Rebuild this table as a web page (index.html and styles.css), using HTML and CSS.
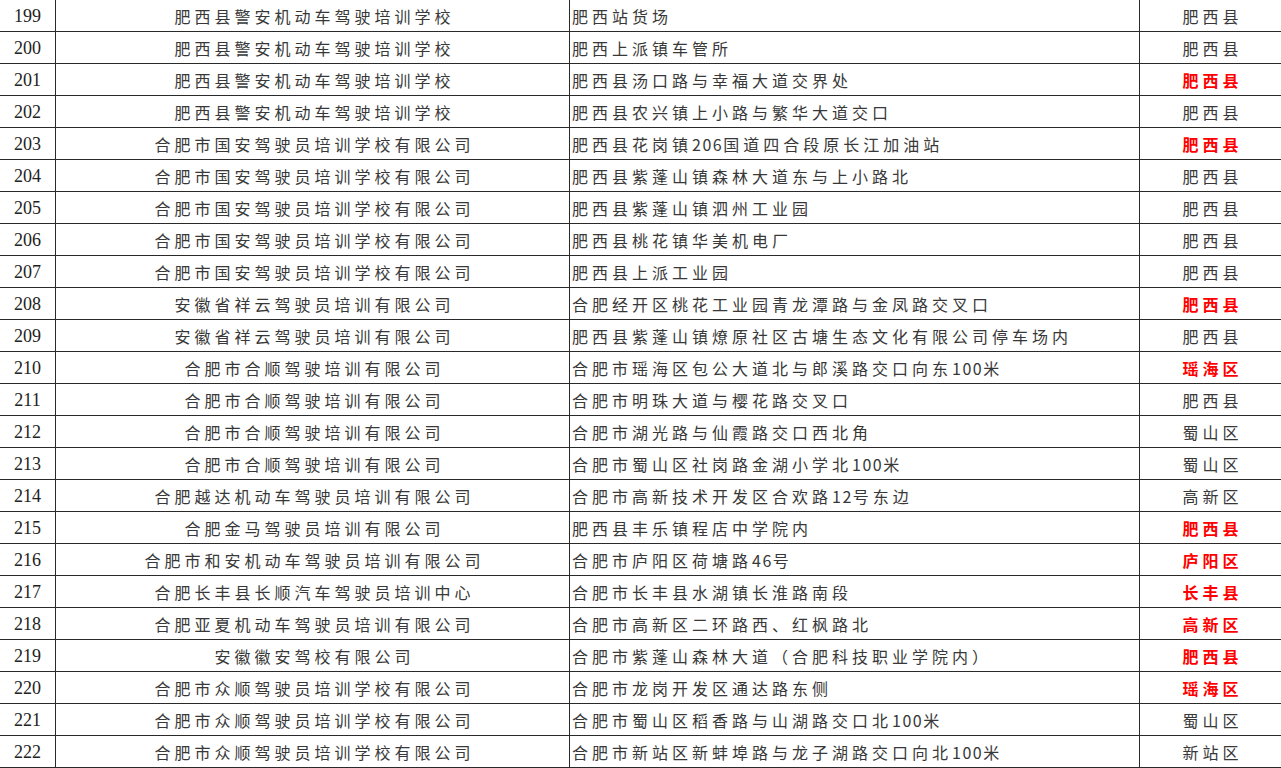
FILE: index.html
```html
<!DOCTYPE html>
<html lang="zh-CN">
<head>
<meta charset="utf-8">
<title>驾驶培训学校训练场地</title>
<link rel="stylesheet" href="styles.css">
</head>
<body>
<div class="sheet">
  <div class="row"><div class="c no">199</div><div class="c school">肥西县警安机动车驾驶培训学校</div><div class="c addr">肥西站货场</div><div class="c area">肥西县</div></div>
  <div class="row"><div class="c no">200</div><div class="c school">肥西县警安机动车驾驶培训学校</div><div class="c addr">肥西上派镇车管所</div><div class="c area">肥西县</div></div>
  <div class="row"><div class="c no">201</div><div class="c school">肥西县警安机动车驾驶培训学校</div><div class="c addr">肥西县汤口路与幸福大道交界处</div><div class="c area hot">肥西县</div></div>
  <div class="row"><div class="c no">202</div><div class="c school">肥西县警安机动车驾驶培训学校</div><div class="c addr">肥西县农兴镇上小路与繁华大道交口</div><div class="c area">肥西县</div></div>
  <div class="row"><div class="c no">203</div><div class="c school">合肥市国安驾驶员培训学校有限公司</div><div class="c addr">肥西县花岗镇<span class="num">206</span>国道四合段原长江加油站</div><div class="c area hot">肥西县</div></div>
  <div class="row"><div class="c no">204</div><div class="c school">合肥市国安驾驶员培训学校有限公司</div><div class="c addr">肥西县紫蓬山镇森林大道东与上小路北</div><div class="c area">肥西县</div></div>
  <div class="row"><div class="c no">205</div><div class="c school">合肥市国安驾驶员培训学校有限公司</div><div class="c addr">肥西县紫蓬山镇泗州工业园</div><div class="c area">肥西县</div></div>
  <div class="row"><div class="c no">206</div><div class="c school">合肥市国安驾驶员培训学校有限公司</div><div class="c addr">肥西县桃花镇华美机电厂</div><div class="c area">肥西县</div></div>
  <div class="row"><div class="c no">207</div><div class="c school">合肥市国安驾驶员培训学校有限公司</div><div class="c addr">肥西县上派工业园</div><div class="c area">肥西县</div></div>
  <div class="row"><div class="c no">208</div><div class="c school">安徽省祥云驾驶员培训有限公司</div><div class="c addr">合肥经开区桃花工业园青龙潭路与金凤路交叉口</div><div class="c area hot">肥西县</div></div>
  <div class="row"><div class="c no">209</div><div class="c school">安徽省祥云驾驶员培训有限公司</div><div class="c addr">肥西县紫蓬山镇燎原社区古塘生态文化有限公司停车场内</div><div class="c area">肥西县</div></div>
  <div class="row"><div class="c no">210</div><div class="c school">合肥市合顺驾驶培训有限公司</div><div class="c addr">合肥市瑶海区包公大道北与郎溪路交口向东<span class="num">100</span>米</div><div class="c area hot">瑶海区</div></div>
  <div class="row"><div class="c no">211</div><div class="c school">合肥市合顺驾驶培训有限公司</div><div class="c addr">合肥市明珠大道与樱花路交叉口</div><div class="c area">肥西县</div></div>
  <div class="row"><div class="c no">212</div><div class="c school">合肥市合顺驾驶培训有限公司</div><div class="c addr">合肥市湖光路与仙霞路交口西北角</div><div class="c area">蜀山区</div></div>
  <div class="row"><div class="c no">213</div><div class="c school">合肥市合顺驾驶培训有限公司</div><div class="c addr">合肥市蜀山区社岗路金湖小学北<span class="num">100</span>米</div><div class="c area">蜀山区</div></div>
  <div class="row"><div class="c no">214</div><div class="c school">合肥越达机动车驾驶员培训有限公司</div><div class="c addr">合肥市高新技术开发区合欢路<span class="num">12</span>号东边</div><div class="c area">高新区</div></div>
  <div class="row"><div class="c no">215</div><div class="c school">合肥金马驾驶员培训有限公司</div><div class="c addr">肥西县丰乐镇程店中学院内</div><div class="c area hot">肥西县</div></div>
  <div class="row"><div class="c no">216</div><div class="c school">合肥市和安机动车驾驶员培训有限公司</div><div class="c addr">合肥市庐阳区荷塘路<span class="num">46</span>号</div><div class="c area hot">庐阳区</div></div>
  <div class="row"><div class="c no">217</div><div class="c school">合肥长丰县长顺汽车驾驶员培训中心</div><div class="c addr">合肥市长丰县水湖镇长淮路南段</div><div class="c area hot">长丰县</div></div>
  <div class="row"><div class="c no">218</div><div class="c school">合肥亚夏机动车驾驶员培训有限公司</div><div class="c addr">合肥市高新区二环路西、红枫路北</div><div class="c area hot">高新区</div></div>
  <div class="row"><div class="c no">219</div><div class="c school">安徽徽安驾校有限公司</div><div class="c addr">合肥市紫蓬山森林大道（合肥科技职业学院内）</div><div class="c area hot">肥西县</div></div>
  <div class="row"><div class="c no">220</div><div class="c school">合肥市众顺驾驶员培训学校有限公司</div><div class="c addr">合肥市龙岗开发区通达路东侧</div><div class="c area hot">瑶海区</div></div>
  <div class="row"><div class="c no">221</div><div class="c school">合肥市众顺驾驶员培训学校有限公司</div><div class="c addr">合肥市蜀山区稻香路与山湖路交口北<span class="num">100</span>米</div><div class="c area">蜀山区</div></div>
  <div class="row"><div class="c no">222</div><div class="c school">合肥市众顺驾驶员培训学校有限公司</div><div class="c addr">合肥市新站区新蚌埠路与龙子湖路交口向北<span class="num">100</span>米</div><div class="c area">新站区</div></div>
</div>
</body>
</html>
```

FILE: styles.css
```css
html, body {
  margin: 0;
  padding: 0;
  background: #ffffff;
}

.sheet {
  width: 1281px;
  font-family: "Noto Sans CJK SC", "Liberation Serif", sans-serif;
  font-size: 16px;
  color: #383838;
}

.row {
  display: grid;
  grid-template-columns: 56px 514px 570px 1fr;
  height: 32px;
}

.c {
  box-sizing: border-box;
  height: 32px;
  border-bottom: 1px solid #2a2a2a;
  border-right: 1px solid #2a2a2a;
  display: flex;
  align-items: center;
  white-space: nowrap;
  overflow: hidden;
  letter-spacing: 4px;
  line-height: 1;
}

.no {
  justify-content: center;
  font-family: "Liberation Serif", serif;
  font-size: 18px;
  letter-spacing: 0;
  color: #222222;
}

.school {
  justify-content: center;
  padding-left: 4px;
}

.addr {
  justify-content: flex-start;
  padding-left: 2px;
}

.area {
  justify-content: center;
  padding-left: 4px;
  border-right: none;
}

.num {
  letter-spacing: 1.5px;
}

.hot {
  color: #ff0000;
  font-weight: bold;
}
```
